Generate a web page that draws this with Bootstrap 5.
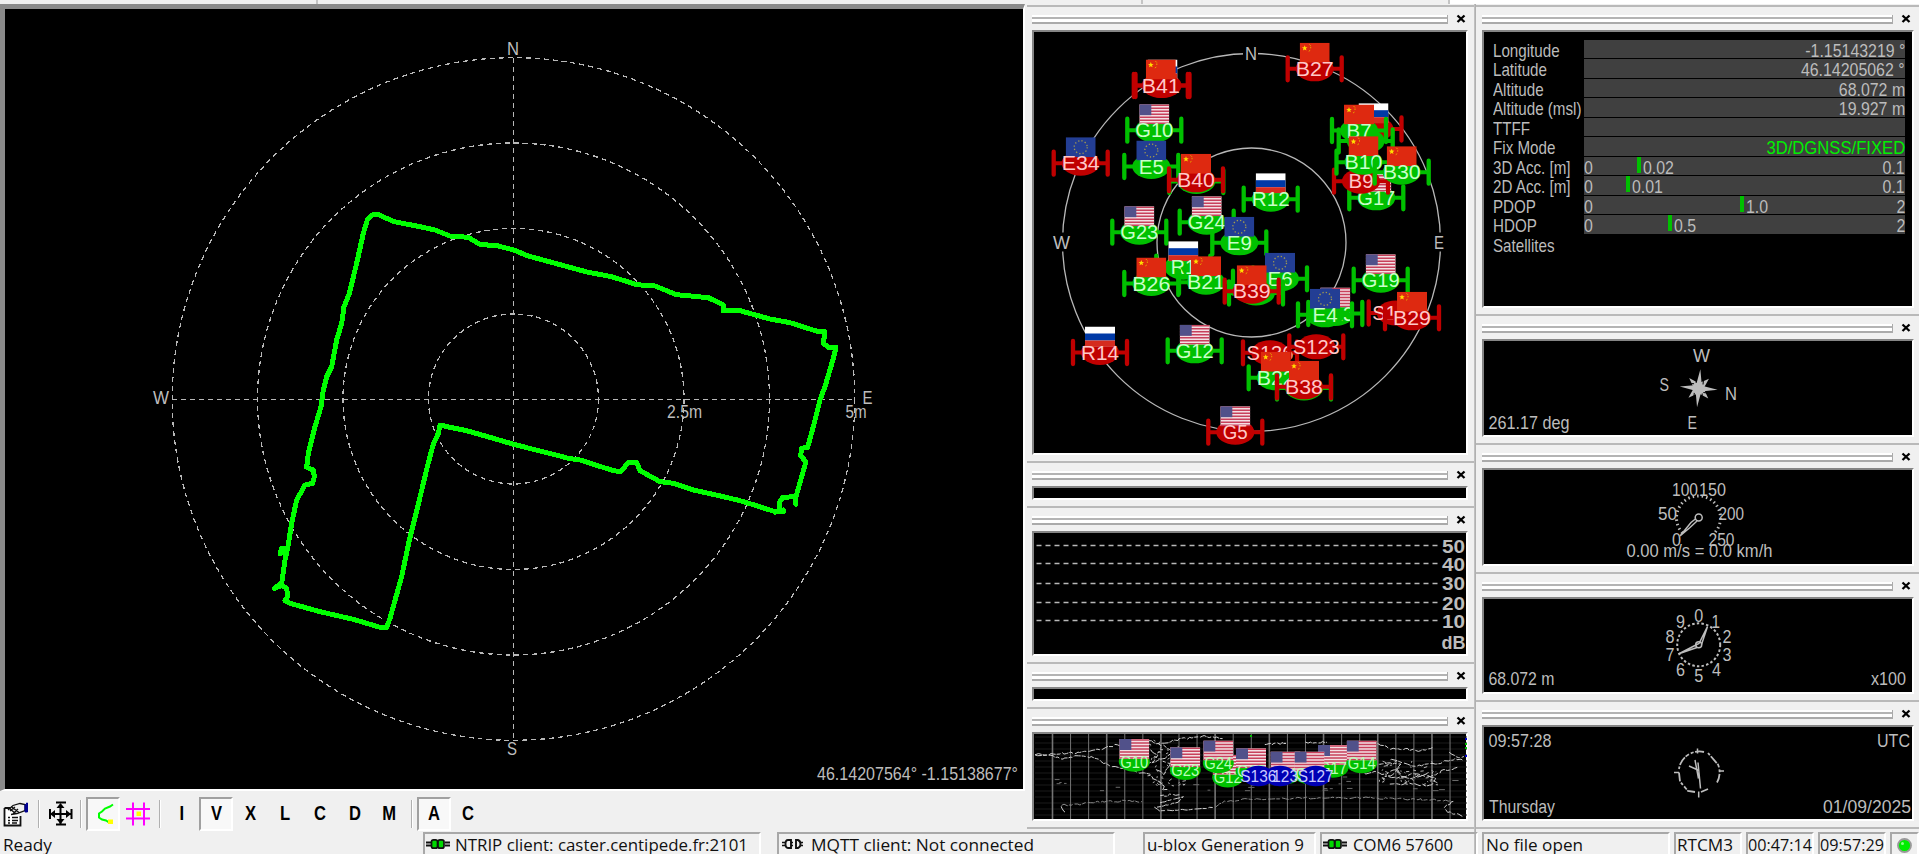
<!DOCTYPE html>
<html lang="en">
<head>
<meta charset="utf-8">
<title>GNSS monitor</title>
<link rel="stylesheet" href="https://cdn.jsdelivr.net/npm/bootstrap@5.3.0/dist/css/bootstrap.min.css">
<style>
body{background:#f0f0f0;width:1919px;height:854px;overflow:hidden;font-family:"Liberation Sans",Arial,sans-serif;color:#000;line-height:1}
svg{display:block}
.topstrip{height:4px;flex:none}
.topstrip i{border-right:2px solid #c4c4c4}
.leftpane{width:1027px;flex:none}
.plot{height:787px;border:solid;border-width:5px 2px 2px 5px;border-color:#8a8a8a #fff #fff #8a8a8a;background:#000;margin-right:2px}
.tools{height:41px;padding-top:4px}
.tool{width:34px;height:34px;margin-right:.6px;font-weight:700;font-size:19.5px}
.tool b{display:inline-block;transform:scaleX(.85)}
.pressed{border:2px solid;border-color:#a0a0a0 #fff #fff #a0a0a0;background:#f8f8f8}
.vsep{width:2px;height:28px;background:#b0b0b0;border-right:1px solid #fff;flex:none}
.midcol{width:448px;flex:none;border-right:1px solid #c0c0c0;padding-top:1px}
.rightcol{width:444px;flex:none;border-left:1px solid #b0b0b0;padding-top:1px}
.pane{border-top:2px solid #b9b9b9;flex:none}
.midcol .pane{padding:0 6px 0 5px}
.rightcol .pane{padding:0 5px 0 6px}
.panehead{height:23px;padding-right:2px}
.rightcol .panehead{padding-right:3px}
.grip{height:9px;border-right:1px solid #aaa;background:linear-gradient(#fff 0 2px,#b4b4b4 2px 4px,#fff 4px 7px,#aaa 7px 9px);margin-right:8px;margin-top:1px}
.closer{width:10px;height:9px}
.scope{background:#000;border:2px solid;border-color:#858585 #fff #fff #858585}
.h456{height:456px}.h456 .scope{height:425px}
.h45{height:45px}.h45 .scope{height:14px}
.h156{height:156px}.h156 .scope{height:125px}
.h120{height:120px}.h120 .scope{height:89px}
.h309{height:309px}.h309 .scope{height:278px;padding:7.5px 7px 0 8px}
.h129{height:129px}.h129 .scope{height:98px}
.h128{height:128px}.h128 .scope{height:97px}
.h127{height:127px}.h127 .scope{height:96px}
.datum{height:19.5px;color:#bcbcbc;font-size:18.5px;line-height:21px}
.datum .lbl{width:92px;flex:none;white-space:nowrap;padding-left:1px}
.datum .lbl span{display:inline-block;transform:scaleX(.82);transform-origin:0 50%}
.bar{height:18.5px;background:#404040;position:relative}
.bar span{display:inline-block;transform:scaleX(.86);transform-origin:100% 50%}
.bar .lo{transform-origin:0 50%}
.bar .fixed-at{transform:scaleX(.9)}
.bar .mark-at{position:absolute;top:0;border-left:4px solid #00c000;height:16px;padding-left:2px;white-space:nowrap}
.bar .mark-at span{transform-origin:0 50%}
.statusbar{height:26px;font-family:"Open Sans","Noto Sans",sans-serif;font-size:16.5px;color:#111;top:832px;left:0;width:1919px}
.cell{height:26px;border:2px solid;border-color:#a8a8a8 #fff #fff #a8a8a8;flex:none;white-space:nowrap;line-height:22px}
.cell .fit{display:inline-block;transform-origin:0 50%}
svg text{fill:#bdbdbd;font-family:"Liberation Sans",Arial,sans-serif;font-size:18.5px}
.grid-line{stroke:#b8b8b8;fill:none;stroke-width:1.3}
</style>
<script src="https://cdn.jsdelivr.net/npm/bootstrap@5.3.0/dist/js/bootstrap.bundle.min.js"></script>
</head>
<body class="d-flex flex-column">
<svg width="0" height="0" class="position-absolute">
<defs>
<symbol id="fB" viewBox="0 0 30 20"><rect width="30" height="20" fill="#de2910"/><path d="M5 2.500l.8 1.900 2 .1-1.600 1.300.6 2L5 6.700l-1.800 1.100.6-2L2.200 4.500l2-.1z" fill="#ffde00"/><path d="M9.500 1.500l1.500 1.500M11 4v1.500M10.500 7.500l-1.500 1" stroke="#e8a000" stroke-width="1"/></symbol>
<symbol id="fG" viewBox="0 0 30 20"><rect width="30" height="20" fill="#f3dfe3"/><path d="M0 1h30M0 4h30M0 7h30M0 10h30M0 13h30M0 16h30M0 19h30" stroke="#c8415c" stroke-width="1.400"/><rect width="12" height="11" fill="#51518a"/></symbol>
<symbol id="fE" viewBox="0 0 30 20"><rect width="30" height="20" fill="#233e94"/><circle cx="15" cy="10" r="6.500" fill="none" stroke="#a29a50" stroke-width="1.300" stroke-dasharray="1.300 2.100"/></symbol>
<symbol id="fR" viewBox="0 0 30 20"><rect width="30" height="20" fill="#fff"/><rect y="7" width="30" height="7" fill="#0039a6"/><rect y="14" width="30" height="6" fill="#d52b1e"/></symbol>
<symbol id="xx" viewBox="0 0 10 9"><path d="M1.500 1.500l7 6.500M8.500 1.500l-7 6.500" stroke="#000" stroke-width="2.300"/></symbol>
<symbol id="plug" viewBox="0 0 24 12"><path d="M0 4.500h5M0 7.500h5M19 4.500h5M19 7.500h5" stroke="#111" stroke-width="1.800"/><rect x="5.500" y="1.800" width="6" height="8.400" rx="2" fill="#00d800" stroke="#111" stroke-width="1.700"/><rect x="12" y="1.800" width="6" height="8.400" rx="2" fill="#00d800" stroke="#111" stroke-width="1.700"/></symbol>
</defs></svg>

<div class="topstrip d-flex"><i style="width:318px"></i><i style="width:825px"></i><i style="width:307px"></i><span class="bg-white flex-grow-1"></span></div>

<div class="d-flex flex-grow-1">
<div class="leftpane">
<div class="plot">
<svg width="1018" height="780" viewBox="5 9 1018 780">
<g class="grid-line" stroke-dasharray="5 4" shape-rendering="crispEdges"><circle cx="513.500" cy="399" r="85"/><circle cx="513.500" cy="399" r="170.500"/><circle cx="513.500" cy="399" r="256"/><circle cx="513.500" cy="399" r="341.300"/><path d="M172 399.500H855M513.500 58V741"/></g>
<text x="507" y="55" textLength="12" lengthAdjust="spacingAndGlyphs">N</text><text x="507" y="755" textLength="10" lengthAdjust="spacingAndGlyphs">S</text>
<text x="153" y="404" textLength="16" lengthAdjust="spacingAndGlyphs">W</text><text x="862.500" y="404" textLength="10" lengthAdjust="spacingAndGlyphs">E</text>
<text x="667" y="418" textLength="35" lengthAdjust="spacingAndGlyphs">2.5m</text><text x="845.500" y="418" textLength="21" lengthAdjust="spacingAndGlyphs">5m</text>
<text x="817" y="779.500" textLength="201" lengthAdjust="spacingAndGlyphs">46.14207564° -1.15138677°</text>
<g transform="translate(140 190) scale(.33333)" fill="none" stroke="#0f0" stroke-width="15" stroke-linejoin="round" stroke-linecap="round" shape-rendering="crispEdges">
<path d="M695 75L718 75 762 95 830 108 885 120 930 138 985 142 1020 163 1075 168 1121 180 1165 198 1260 224 1345 247 1415 260 1490 284 1545 288 1610 314 1705 323 1750 345 1750 362 1800 362 1890 387 1950 398 2035 425 2055 425 2050 460 2068 474 2088 472 2080 505 2055 590 2040 630 2020 710 2003 772 1985 775 1982 798 1998 815 1985 860 1968 920 1928 922 1920 935 1918 965 1930 965 1905 965 1850 947 1800 932 1750 920 1660 900 1600 880 1560 875 1500 842 1490 818 1465 818 1442 845 1420 842 1320 810 1285 805 1260 798 1200 783 1121 763 1060 745 980 722 930 712 900 705 895 730 880 762 862 830 838 930 808 1050 785 1160 750 1285 740 1312 720 1312 640 1288 540 1265 450 1240 435 1232 443 1220 440 1195 425 1187 403 1195 425 1180 435 1110 443 1075 425 1075 420 1092 443 1075 455 1000 470 930 495 885 518 880 523 860 520 840 500 832 505 790 525 710 543 650 550 600 560 560 575 530 590 450 605 400 612 350 628 310 650 220 670 130 682 90z"/><path d="M1966 922L1968 943M1905 967L1930 960"/></g>
</svg>
</div>
<div class="tools d-flex align-items-center">
<svg width="38" height="34" viewBox="0 0 38 34"><path d="M4.500 11h6M4.500 11v17.500h16V19" fill="#fff" stroke="#111" stroke-width="1.800"/><path d="M8 20.500h2M12 20.500h6M8 23.500h2M12 23.500h6M8 26h2M12 26h5" stroke="#111" stroke-width="1.400"/><path d="M8 13l5-4.500 7-2 5 1v6l-8 3-6 1M10 14l5-4M13 17l5-5M9 11l7 6M11 9.500l8 6" fill="none" stroke="#111" stroke-width="1.300"/><path d="M25 7.500h1.500v-1.500h1v9h-2.500z" fill="#000090" stroke="#000090"/></svg>
<i class="vsep"></i>
<svg width="40" height="34" viewBox="40 0 40 34"><path d="M60.500 8v20M50 17h22M56 5.500h10M56 27.500h10M50 12v10M71.500 12v10" stroke="#000" stroke-width="2"/><path d="M60.500 6l4 5h-8zM60.500 27l4-5h-8zM50 17l5-4v8zM71 17l-5-4v8z"/></svg>
<i class="vsep"></i>
<div class="tool pressed ms-1"><svg width="30" height="30" viewBox="0 0 30 30"><path d="M25 5.500l-3 2-5 2-3 3-3 2v4l3 2 4 1 3 2" fill="none" stroke="#0f0" stroke-width="2"/><rect x="20" y="20.500" width="5" height="4.500" fill="#ff0"/></svg></div>
<svg width="38" height="34" viewBox="0 0 38 34"><path d="M12 5.500v23M23 5.500v23M5 12h24M5 21.500h24" stroke="#f0f" stroke-width="2"/><rect x="15.500" y="14.500" width="4.500" height="4.500" fill="#ff0"/></svg>
<i class="vsep"></i>
<div class="tool d-flex align-items-center justify-content-center ms-1"><b>I</b></div>
<div class="tool pressed d-flex align-items-center justify-content-center"><b>V</b></div>
<div class="tool d-flex align-items-center justify-content-center"><b>X</b></div>
<div class="tool d-flex align-items-center justify-content-center"><b>L</b></div>
<div class="tool d-flex align-items-center justify-content-center"><b>C</b></div>
<div class="tool d-flex align-items-center justify-content-center"><b>D</b></div>
<div class="tool d-flex align-items-center justify-content-center"><b>M</b></div>
<i class="vsep ms-1"></i>
<div class="tool pressed d-flex align-items-center justify-content-center ms-1"><b>A</b></div>
<div class="tool d-flex align-items-center justify-content-center"><b>C</b></div>
</div>
</div>

<div class="midcol">
<div class="pane h456"><div class="panehead d-flex align-items-center"><span class="grip flex-grow-1"></span><svg class="closer"><use href="#xx"/></svg></div>
<div class="scope"><svg id="sky" width="433" height="421" viewBox="1034 32.5 433 421"><g class="grid-line"><circle cx="1251.500" cy="243" r="189"/><circle cx="1251.500" cy="243" r="94.500"/></g>
<g fill="#000"><rect x="1243" y="44" width="15" height="18"/><rect x="1052" y="233" width="19" height="19"/><rect x="1432" y="233" width="14" height="19"/></g>
<text x="1245" y="60" textLength="12" lengthAdjust="spacingAndGlyphs">N</text><text x="1053" y="249" textLength="17" lengthAdjust="spacingAndGlyphs">W</text><text x="1434" y="249" textLength="10" lengthAdjust="spacingAndGlyphs">E</text></svg></div></div>
<div class="pane h45"><div class="panehead d-flex align-items-center"><span class="grip flex-grow-1"></span><svg class="closer"><use href="#xx"/></svg></div><div class="scope"></div></div>
<div class="pane h156"><div class="panehead d-flex align-items-center"><span class="grip flex-grow-1"></span><svg class="closer"><use href="#xx"/></svg></div>
<div class="scope"><svg width="433" height="121" viewBox="1034 534 433 121"><path class="grid-line" stroke-dasharray="5 4" d="M1036.500 546.500H1438M1036.500 564.500H1438M1036.500 584.500H1438M1036.500 603.500H1438M1036.500 621.500H1438"/>
<g font-weight="700"><text x="1442" y="553.500" textLength="23" lengthAdjust="spacingAndGlyphs">50</text><text x="1442" y="571.500" textLength="23" lengthAdjust="spacingAndGlyphs">40</text><text x="1442" y="591" textLength="23" lengthAdjust="spacingAndGlyphs">30</text><text x="1442" y="610.500" textLength="23" lengthAdjust="spacingAndGlyphs">20</text><text x="1442" y="628.500" textLength="23" lengthAdjust="spacingAndGlyphs">10</text><text x="1441.500" y="649.500" textLength="24" lengthAdjust="spacingAndGlyphs">dB</text></g></svg></div></div>
<div class="pane h45"><div class="panehead d-flex align-items-center"><span class="grip flex-grow-1"></span><svg class="closer"><use href="#xx"/></svg></div><div class="scope"></div></div>
<div class="pane h120"><div class="panehead d-flex align-items-center"><span class="grip flex-grow-1"></span><svg class="closer"><use href="#xx"/></svg></div>
<div class="scope"><svg id="world" width="433" height="85" viewBox="1034 735 433 85"></svg></div></div>
<div style="border-top:2px solid #b9b9b9"></div>
</div>

<div class="rightcol">
<div class="pane h309"><div class="panehead d-flex align-items-center"><span class="grip flex-grow-1"></span><svg class="closer"><use href="#xx"/></svg></div>
<div class="scope">
<div class="datum d-flex"><div class="lbl"><span>Longitude</span></div><div class="bar flex-grow-1 text-end"><span>-1.15143219 °</span></div></div>
<div class="datum d-flex"><div class="lbl"><span>Latitude</span></div><div class="bar flex-grow-1 text-end"><span>46.14205062 °</span></div></div>
<div class="datum d-flex"><div class="lbl"><span>Altitude</span></div><div class="bar flex-grow-1 text-end"><span>68.072 m</span></div></div>
<div class="datum d-flex"><div class="lbl"><span>Altitude (msl)</span></div><div class="bar flex-grow-1 text-end"><span>19.927 m</span></div></div>
<div class="datum d-flex"><div class="lbl"><span>TTFF</span></div><div class="bar flex-grow-1"></div></div>
<div class="datum d-flex"><div class="lbl"><span>Fix Mode</span></div><div class="bar flex-grow-1 text-end" style="color:#00f000"><span class="fixed-at">3D/DGNSS/FIXED</span></div></div>
<div class="datum d-flex"><div class="lbl"><span>3D Acc. [m]</span></div><div class="bar flex-grow-1 d-flex justify-content-between"><span class="lo">0</span><div class="mark-at" style="left:16.5%"><span>0.02</span></div><span>0.1</span></div></div>
<div class="datum d-flex"><div class="lbl"><span>2D Acc. [m]</span></div><div class="bar flex-grow-1 d-flex justify-content-between"><span class="lo">0</span><div class="mark-at" style="left:13.1%"><span>0.01</span></div><span>0.1</span></div></div>
<div class="datum d-flex"><div class="lbl"><span>PDOP</span></div><div class="bar flex-grow-1 d-flex justify-content-between"><span class="lo">0</span><div class="mark-at" style="left:48.6%"><span>1.0</span></div><span>2</span></div></div>
<div class="datum d-flex"><div class="lbl"><span>HDOP</span></div><div class="bar flex-grow-1 d-flex justify-content-between"><span class="lo">0</span><div class="mark-at" style="left:26.2%"><span>0.5</span></div><span>2</span></div></div>
<div class="datum d-flex"><div class="lbl"><span>Satellites</span></div></div>
</div></div>
<div class="pane h129"><div class="panehead d-flex align-items-center"><span class="grip flex-grow-1"></span><svg class="closer"><use href="#xx"/></svg></div>
<div class="scope"><svg width="429" height="94" viewBox="1484 341.500 429 94"><g transform="translate(1698.700 388.700) rotate(5)" fill="#bdbdbd"><path d="M0-19L2.500-5 5-2.500 19 0 5 2.500 2.500 5 0 19-2.500 5-5 2.500-19 0-5-2.500-2.500-5z"/><path transform="rotate(42)" d="M0-14L3-5 5-3 14 0 5 3 3 5 0 14-3 5-5 3-14 0-5-3-3-5z"/><path d="M-3-9v4M4-8v4M-4 5v4M4 5v4M-8-4h3M5 4h4" stroke="#000" stroke-width="1"/></g>
<text x="1693" y="362.500" textLength="17" lengthAdjust="spacingAndGlyphs">W</text><text x="1659.500" y="391.500" textLength="9.500" lengthAdjust="spacingAndGlyphs">S</text><text x="1725" y="400.500" textLength="12" lengthAdjust="spacingAndGlyphs">N</text><text x="1687.500" y="429" textLength="9.500" lengthAdjust="spacingAndGlyphs">E</text><text x="1488.500" y="429" textLength="81" lengthAdjust="spacingAndGlyphs">261.17 deg</text></svg></div></div>
<div class="pane h129"><div class="panehead d-flex align-items-center"><span class="grip flex-grow-1"></span><svg class="closer"><use href="#xx"/></svg></div>
<div class="scope"><svg width="429" height="94" viewBox="1484 470.500 429 94"><path d="M1682.500 533.500A22 22 0 1 1 1714.500 533.500" fill="none" stroke="#bdbdbd" stroke-width="3" stroke-dasharray="1.500 3"/><circle cx="1698.700" cy="518" r="3.500" fill="none" stroke="#bdbdbd" stroke-width="1.500"/><path d="M1697 521.500L1690 528 1680 536.500 1691 523 1696 519" fill="none" stroke="#bdbdbd" stroke-width="1.500"/>
<text x="1672" y="546.500" textLength="9" lengthAdjust="spacingAndGlyphs">0</text><text x="1658" y="520" textLength="19" lengthAdjust="spacingAndGlyphs">50</text><text x="1672" y="496" textLength="26" lengthAdjust="spacingAndGlyphs">100</text><text x="1699" y="496" textLength="27" lengthAdjust="spacingAndGlyphs">150</text><text x="1718.500" y="520" textLength="25.500" lengthAdjust="spacingAndGlyphs">200</text><text x="1708.500" y="546.500" textLength="26" lengthAdjust="spacingAndGlyphs">250</text><text x="1626.500" y="557.500" textLength="146" lengthAdjust="spacingAndGlyphs">0.00 m/s = 0.0 km/h</text></svg></div></div>
<div class="pane h128"><div class="panehead d-flex align-items-center"><span class="grip flex-grow-1"></span><svg class="closer"><use href="#xx"/></svg></div>
<div class="scope"><svg width="429" height="93" viewBox="1484 599.500 429 93"><circle cx="1698.700" cy="645.300" r="21.500" fill="none" stroke="#bdbdbd" stroke-width="2" stroke-dasharray="2.500 2.200"/><circle cx="1698.700" cy="645.300" r="3" fill="none" stroke="#bdbdbd" stroke-width="1.500"/><path d="M1697 648L1679.500 654 1693 647 1699 644 1707.500 627 1701.500 645" fill="none" stroke="#bdbdbd" stroke-width="1.500"/>
<text x="1694.200" y="622" textLength="9" lengthAdjust="spacingAndGlyphs">0</text><text x="1711.500" y="628" textLength="8.500" lengthAdjust="spacingAndGlyphs">1</text><text x="1722.500" y="643.500" textLength="9" lengthAdjust="spacingAndGlyphs">2</text><text x="1722.500" y="661" textLength="9" lengthAdjust="spacingAndGlyphs">3</text><text x="1712" y="676.500" textLength="9" lengthAdjust="spacingAndGlyphs">4</text><text x="1694.200" y="682" textLength="9" lengthAdjust="spacingAndGlyphs">5</text><text x="1676" y="676.500" textLength="9" lengthAdjust="spacingAndGlyphs">6</text><text x="1665.500" y="661" textLength="9" lengthAdjust="spacingAndGlyphs">7</text><text x="1665.500" y="643.500" textLength="9" lengthAdjust="spacingAndGlyphs">8</text><text x="1676" y="628" textLength="9" lengthAdjust="spacingAndGlyphs">9</text>
<text x="1488.500" y="685.500" textLength="66" lengthAdjust="spacingAndGlyphs">68.072 m</text><text x="1871" y="685.500" textLength="35" lengthAdjust="spacingAndGlyphs">x100</text></svg></div></div>
<div class="pane h127"><div class="panehead d-flex align-items-center"><span class="grip flex-grow-1"></span><svg class="closer"><use href="#xx"/></svg></div>
<div class="scope"><svg width="429" height="92" viewBox="1484 727.500 429 92"><g fill="none" stroke="#bdbdbd" stroke-width="1.500"><path d="M1717 783A20.500 20.500 0 0 0 1718 765L1708 753.500M1704 752.500A20.500 20.500 0 0 0 1679 769.500M1679 773L1680 782 1688 791.500 1695 792.500M1701 792.500L1708 789.500" stroke-dasharray="9 1.500 3 2 4 1" stroke-width="1.800"/><path d="M1697.500 749v5M1698.700 792v6M1674 773h5M1719 771.500h5M1699 771L1689 766.500M1698.500 779L1695 760.500M1698 763L1700.500 789"/></g>
<text x="1488.500" y="747" textLength="63" lengthAdjust="spacingAndGlyphs">09:57:28</text><text x="1877" y="747" textLength="33" lengthAdjust="spacingAndGlyphs">UTC</text><text x="1489" y="813.500" textLength="66" lengthAdjust="spacingAndGlyphs">Thursday</text><text x="1823" y="813.500" textLength="88" lengthAdjust="spacingAndGlyphs">01/09/2025</text></svg></div></div>
<div style="border-top:2px solid #b9b9b9"></div>
</div>
</div>

<div class="statusbar d-flex position-absolute">
<div style="width:423px;padding:2px 0 0 3px;line-height:22px"><span class="fit d-inline-block" style="transform-origin:0 50%" data-w="49">Ready</span></div>
<div class="cell d-flex" style="width:338px;margin-right:16px"><svg class="mt-1" width="24" height="12" style="margin-left:1px"><use href="#plug"/></svg><span style="width:5px"></span><span class="fit" data-w="293">NTRIP client: caster.centipede.fr:2101</span></div>
<div class="cell d-flex" style="width:338px;margin-right:28px"><svg class="mt-1" width="28" height="12" viewBox="-1 1 28 12"><path d="M2 5.500h3M2 8.500h3M20 5.500h3M20 8.500h3M11 5.500h2M11 8.500h2" stroke="#111" stroke-width="1.700"/><path d="M11 3H8Q5.500 3 5.500 7t2.500 4h3zM16 3h2q2.500 1 2.500 4t-2.500 4h-2z" fill="none" stroke="#111" stroke-width="1.900"/></svg><span style="width:4px"></span><span class="fit" data-w="223">MQTT client: Not connected</span></div>
<div class="cell" style="width:173px;margin-right:4px;padding-left:2px"><span class="fit" data-w="157">u-blox Generation 9</span></div>
<div class="cell d-flex" style="width:158px;margin-right:4px"><svg class="mt-1" width="24" height="12" style="margin-left:1px"><use href="#plug"/></svg><span style="width:6px"></span><span class="fit" data-w="100">COM6 57600</span></div>
<div class="cell" style="width:188px;margin-right:4px;padding-left:2px"><span class="fit" data-w="97">No file open</span></div>
<div class="cell" style="width:68px;margin-right:4px;padding-left:1px"><span class="fit" data-w="56">RTCM3</span></div>
<div class="cell" style="width:68px;margin-right:4px"><span class="fit" data-w="64">00:47:14</span></div>
<div class="cell" style="width:68px;margin-right:4px"><span class="fit" data-w="64">09:57:29</span></div>
<div class="cell" style="width:29px"><svg width="25" height="24"><circle cx="12.500" cy="11.500" r="6.500" fill="#0e0" stroke="#999" stroke-width="1.800"/><circle cx="10.500" cy="9.500" r="1.500" fill="#8f8"/></svg></div>
</div>

<script>
// Squeeze each status text to its own width
document.querySelectorAll('.fit').forEach(e=>{e.style.transform='scaleX('+(e.dataset.w/e.getBoundingClientRect().width)+')'});

const label=(x,y,s,w,fill)=>`<text x="${x-w/2}" y="${y}" textLength="${w}" lengthAdjust="spacingAndGlyphs" style="fill:${fill}">${s}</text>`;
// name, x, y, colour (g used / r unused), flag
const sats=[
['',1162.500,86,'r','R'],['B41',1160.800,86,'r','B'],['B27',1314.700,69.300,'r','B'],['G10',1154.300,130.700,'g','G'],['E34',1080.700,163.700,'r','E'],
['',1196.300,182,'g',''],['E5',1151.300,167,'g','E'],['B40',1196,180.300,'r','B'],['R12',1270.700,199.700,'g','R'],
['G17',1376.300,198.300,'g','G'],['B9',1361,181.700,'r',''],['',1374.500,129.500,'r',''],['',1365.700,141.500,'g',''],['',1373.500,129.700,'','R'],['B7',1359,131,'g','B'],
['B10',1363.500,162.700,'g','B'],['B30',1401.700,172.700,'g','B'],
['G23',1139.300,232.700,'g','G'],['G24',1206.700,222.700,'g','G'],['E9',1239.300,243.300,'g','E'],
['R1',1183.300,267.700,'g','R'],['B26',1151.300,284,'g','B'],['B21',1206,282.700,'g','B'],['E6',1280,279.300,'g','E'],
['',1256,293.500,'g',''],['B39',1251.700,291.700,'r','B'],['G19',1380.700,280.700,'g','G'],['G13',1335.300,314,'g','G'],['E4',1325,315.300,'g','E'],
['S131',1395.700,313.500,'r',''],['B29',1412,318.300,'r','B'],['R14',1100,353,'r','R'],['G12',1194.700,351.300,'g','G'],
['S136',1270,353.300,'r',''],['S123',1316.300,347.300,'r',''],['B22',1275.700,378.300,'g','B'],['',1304,388.500,'g',''],['B38',1304,387.300,'r','B'],['G5',1235.300,432.700,'r','G']];
document.getElementById('sky').insertAdjacentHTML('beforeend',sats.map(([n,x,y,c,f])=>{
 const col=c==='g'?'#00c000':'#c00000';
 let s='';
 if(c)s+=`<path d="M${x-27} ${y}H${x+27}" stroke="${col}" stroke-width="4"/><path d="M${x-27} ${y-11.500}V${y+11.500}M${x+27} ${y-11.500}V${y+11.500}" stroke="${col}" stroke-width="4.300" stroke-linecap="round"/><ellipse cx="${x}" cy="${y}" rx="19" ry="12.500" fill="${col}"/>`;
 if(f)s+=`<use href="#f${f}" x="${x-15}" y="${y-26}" width="30" height="20"/>`;
 if(n){const w=n.length===2?25:n.length===3?38:n.length===4?47:10;s+=label(x,y+7,n,w,c==='g'?'#c8ffc8':'#ffc8c8').replace('style="','style="font-size:20px;');}
 return s}).join(''));

// World map: graticule, rough coastlines, visible satellites
let seed=7;const rnd=()=>(seed=(seed*16807)%2147483647)/2147483647;
let m='';
for(let i=0;i<14;i++)m+=`<path d="M1035 ${738+i*6}H1467" stroke="#1a1a1a"/>`;
for(let i=0;i<23;i++)m+=`<path d="M${1052.500+i*18.070} 734V820" stroke="#747474" stroke-width="${i%3?1:1.600}"/>`;
const rough=(pts,a)=>{let d='';for(let i=0;i<pts.length-1;i++){const [x1,y1]=pts[i],[x2,y2]=pts[i+1],n=Math.max(2,Math.hypot(x2-x1,y2-y1)/2.5|0);for(let k=0;k<n;k++){d+=(d?'L':'M')+(x1+(x2-x1)*k/n+(rnd()-.5)*a).toFixed(1)+' '+(y1+(y2-y1)*k/n+(rnd()-.5)*a).toFixed(1)}}return d};
[[[1036,755],[1050,756],[1060,760],[1075,757],[1092,758],[1110,767],[1130,771],[1150,776],[1158,782],[1165,788],[1162,791],[1172,791]],
[[1036,756],[1070,754],[1090,752],[1105,749],[1115,746],[1125,748]],[[1148,742],[1160,745],[1175,741],[1190,739],[1205,737],[1225,740]],
[[1150,752],[1158,757],[1152,763],[1165,759],[1172,752],[1164,747],[1155,743]],[[1155,770],[1163,775],[1170,765],[1160,762]],
[[1264,745],[1275,745],[1285,744],[1280,747]],[[1305,744],[1330,743]],
[[1378,745],[1390,750],[1405,750],[1420,752],[1436,749]],[[1450,753],[1456,758],[1466,757]],
[[1364,775],[1375,773],[1385,776],[1395,770],[1402,778],[1415,774],[1430,778],[1442,772],[1460,768]],
[[1385,764],[1400,765],[1395,775],[1385,778],[1410,779],[1425,776],[1436,779],[1430,787],[1412,785],[1388,785]],
[[1390,760],[1415,767],[1440,764],[1455,760],[1466,762]],
[[1061,806],[1080,805],[1100,803],[1130,802],[1145,803]],[[1160,804],[1172,800],[1183,798],[1178,803],[1168,806],[1155,808],[1160,812],[1180,811],[1200,810],[1215,808]],[[1215,808],[1225,803],[1245,800],[1275,800],[1310,799],[1340,799],[1375,799],[1400,800],[1440,801],[1453,802]],[[1453,802],[1445,808],[1447,813],[1465,817]],
[[1061,807],[1068,816]],[[1160,797],[1170,796],[1182,795]]
].forEach((p,i)=>{m+=`<path d="${rough(p,i===13?1:2)}" fill="none" stroke="${i===14||i===12?'#8a8a8a':'#d0d0d0'}" stroke-width="1" stroke-dasharray="7 1 4 2"/>`});
for(let i=0;i<26;i++){const x=1036+rnd()*420,y=778+rnd()*14;m+=`<path d="M${x} ${y}h${2+rnd()*5}" stroke="#6a6a6a"/>`}
for(let i=0;i<110;i++){const l=i%2,x=(l?1150:1378)+rnd()*(l?34:60),y=(l?741:762)+rnd()*(l?46:24);m+=`<path d="M${x} ${y}l${(rnd()-.5)*7} ${(rnd()-.5)*4}" stroke="#b4b4b4"/>`}
m+='<path d="M1251 736v2M1466 744v2M1466 748v2" stroke="#00c000" stroke-width="2"/><path d="M1466 739v2M1466 756v2" stroke="#00c" stroke-width="2"/>';
[['G10',1134.300,762.500,'g'],['G23',1185.300,770.700,'g'],['G12',1227.700,778.300,'g'],['G24',1218.300,764,'g'],['G15',1251,771.700,'g'],['G17',1333,768.500,'g'],['G13',1285.500,775,'g'],['G19',1309.500,775,'g'],['G14',1361.700,764,'g'],['S123',1280,777,'b'],['S136',1258.300,777,'b'],['S127',1315.700,777,'b']].forEach(([n,x,y,c])=>{
 m+=`<ellipse cx="${x}" cy="${y}" rx="15.500" ry="10.300" fill="${c==='g'?'#00c000':'#0000b4'}"/>`;
 if(c==='g')m+=`<use href="#fG" x="${x-15}" y="${y-22.500}" width="30" height="20"/>`;
 m+=label(x,y+6,n,c==='g'?28:36,c==='g'?'#b8ffb8':'#c8c8ff').replace('style="','style="font-size:17px;')});
document.getElementById('world').innerHTML=m;
</script>
</body>
</html>
